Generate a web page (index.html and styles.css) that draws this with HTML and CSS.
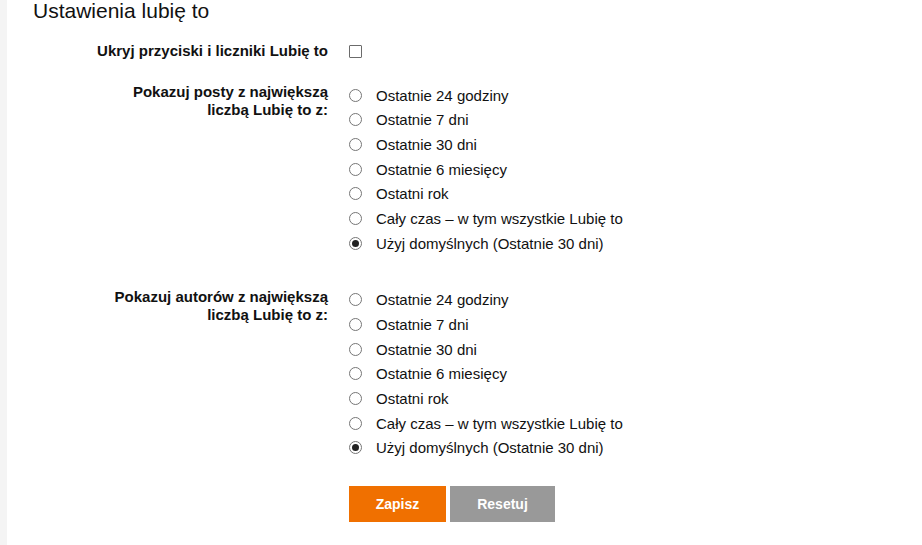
FILE: index.html
```html
<!DOCTYPE html>
<html lang="pl">
<head>
<meta charset="utf-8">
<title>Ustawienia lubię to</title>
<link rel="stylesheet" href="styles.css">
</head>
<body>
<div class="page">
  <div class="strip"></div>
  <main class="content">
    <h1 class="title">Ustawienia lubię to</h1>
    <form class="settings">
      <div class="field field-check">
        <div class="label">Ukryj przyciski i liczniki Lubię to</div>
        <div class="controls"><input class="check" type="checkbox"></div>
      </div>
      <div class="field">
        <div class="label">Pokazuj posty z największą liczbą Lubię to z:</div>
        <ul class="options">
          <li><input class="radio" type="radio" name="posts"><span>Ostatnie 24 godziny</span></li>
          <li><input class="radio" type="radio" name="posts"><span>Ostatnie 7 dni</span></li>
          <li><input class="radio" type="radio" name="posts"><span>Ostatnie 30 dni</span></li>
          <li><input class="radio" type="radio" name="posts"><span>Ostatnie 6 miesięcy</span></li>
          <li><input class="radio" type="radio" name="posts"><span>Ostatni rok</span></li>
          <li><input class="radio" type="radio" name="posts"><span>Cały czas – w tym wszystkie Lubię to</span></li>
          <li><input class="radio" type="radio" name="posts" checked><span>Użyj domyślnych (Ostatnie 30 dni)</span></li>
        </ul>
      </div>
      <div class="field field-second">
        <div class="label">Pokazuj autorów z największą liczbą Lubię to z:</div>
        <ul class="options">
          <li><input class="radio" type="radio" name="authors"><span>Ostatnie 24 godziny</span></li>
          <li><input class="radio" type="radio" name="authors"><span>Ostatnie 7 dni</span></li>
          <li><input class="radio" type="radio" name="authors"><span>Ostatnie 30 dni</span></li>
          <li><input class="radio" type="radio" name="authors"><span>Ostatnie 6 miesięcy</span></li>
          <li><input class="radio" type="radio" name="authors"><span>Ostatni rok</span></li>
          <li><input class="radio" type="radio" name="authors"><span>Cały czas – w tym wszystkie Lubię to</span></li>
          <li><input class="radio" type="radio" name="authors" checked><span>Użyj domyślnych (Ostatnie 30 dni)</span></li>
        </ul>
      </div>
      <div class="actions">
        <button type="button" class="btn btn-save">Zapisz</button>
        <button type="button" class="btn btn-reset">Resetuj</button>
      </div>
    </form>
  </main>
</div>
</body>
</html>
```
FILE: styles.css
```css
* { box-sizing: border-box; }
html, body { margin: 0; padding: 0; background: #fff; }
body {
  font-family: "Liberation Sans", Arial, sans-serif;
  color: #111;
  font-size: 15px;
}
.page {
  display: flex;
  min-height: 545px;
}
.strip {
  width: 7px;
  flex: 0 0 7px;
  background: #f4f4f4;
}
.content {
  flex: 1;
  padding-left: 26px;
}
.title {
  margin: 0;
  font-size: 21px;
  font-weight: normal;
  line-height: 22px;
  color: #111;
}
.settings {
  margin-top: 20px;
  padding-left: 57px;
}
.field {
  display: grid;
  grid-template-columns: 238px 1fr;
  column-gap: 21px;
}
.field-check {
  margin-bottom: 23px;
}
.field-second {
  margin-top: 32px;
}
.label {
  text-align: right;
  font-weight: bold;
  line-height: 18px;
  color: #111;
}
.controls {
  height: 18px;
  display: flex;
  align-items: center;
}
.check {
  appearance: none;
  -webkit-appearance: none;
  margin: 0;
  width: 13px;
  height: 13px;
  border: 1px solid #6b6b6b;
  border-radius: 1px;
  background: #fff;
}
.options {
  list-style: none;
  margin: 0;
  padding: 0;
}
.options li {
  display: flex;
  align-items: center;
  height: 24.67px;
}
.radio {
  appearance: none;
  -webkit-appearance: none;
  margin: 0 14px 0 0;
  width: 13px;
  height: 13px;
  border: 1px solid #767676;
  border-radius: 50%;
  background: #fff;
  display: grid;
  place-items: center;
}
.radio:checked::after {
  content: "";
  width: 7px;
  height: 7px;
  border-radius: 50%;
  background: #222;
}
.actions {
  display: flex;
  gap: 4px;
  margin-top: 26px;
  padding-left: 259px;
}
.btn {
  border: 0;
  font-family: "Liberation Sans", Arial, sans-serif;
  font-weight: bold;
  font-size: 14px;
  color: #fff;
  height: 36px;
  padding: 0;
  cursor: pointer;
}
.btn-save { background: #f07000; width: 97px; }
.btn-reset { background: #999999; width: 105px; }
```
